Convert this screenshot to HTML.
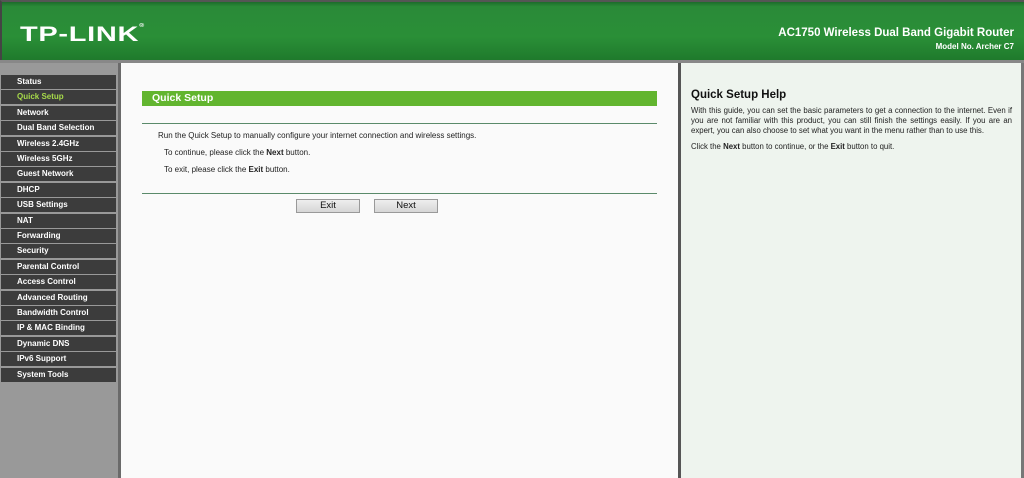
<!DOCTYPE html>
<html><head><style>
*{margin:0;padding:0;box-sizing:border-box}
body{width:1024px;height:478px;overflow:hidden;font-family:"Liberation Sans",sans-serif;background:#f8f8f8;position:relative}
#hdr{position:absolute;left:0;top:0;width:1024px;height:60px;background:linear-gradient(#1d6b2b 0,#2a8a38 8%,#2a8f37 60%,#1f7a2c 100%);border-top:2px solid #555;border-left:2px solid #444}
#logo{position:absolute;left:18px;top:21px;color:#fff;font-weight:bold;font-size:21px;letter-spacing:0.5px;transform:scaleX(1.38);transform-origin:left top}
#logo sup{font-size:5px;vertical-align:top}
#t1{position:absolute;right:10px;top:25px;color:#fff;font-weight:bold;font-size:11.5px}
#t2{position:absolute;right:10px;top:40px;color:#fff;font-weight:bold;font-size:8px}
#strip{position:absolute;left:0;top:60px;width:1024px;height:3px;background:#888}
#side{position:absolute;left:0;top:63px;width:121px;height:415px;background:#999;border-right:3px solid #6a6a6a}
.m{position:absolute;left:1px;width:115px;height:14px;background:#3c3c3c;color:#fff;font-size:8px;font-weight:bold;padding-left:16px;line-height:14px}
#main{position:absolute;left:121px;top:63px;width:557px;height:415px;background:#fafafa}
#div{position:absolute;left:678px;top:63px;width:3px;height:415px;background:#555}
#help{position:absolute;left:681px;top:63px;width:343px;height:415px;background:#eef4ee;border-right:3px solid #777}
#bar{position:absolute;left:142px;top:91px;width:515px;height:15px;background:#62b52f;color:#fff;font-weight:bold;font-size:10.5px;line-height:15px;padding-left:10px}
.hr{position:absolute;left:142px;width:515px;height:1px;background:#5a8a6a}
.p{position:absolute;font-size:8px;color:#222}
.btn{position:absolute;top:199px;width:64px;height:14px;background:linear-gradient(#eee,#d6d6d6);border:1px solid #999;font-size:9.5px;text-align:center;line-height:12px;color:#111}
</style></head><body>
<div id="hdr"><div id="logo">TP-LINK<sup>®</sup></div><div id="t1">AC1750 Wireless Dual Band Gigabit Router</div><div id="t2">Model No. Archer C7</div></div>
<div id="strip"></div>
<div id="side">
<div class="m" style="top:12px">Status</div>
<div class="m" style="top:27.4px;color:#a6d94a">Quick Setup</div>
<div class="m" style="top:42.8px">Network</div>
<div class="m" style="top:58.2px">Dual Band Selection</div>
<div class="m" style="top:73.6px">Wireless 2.4GHz</div>
<div class="m" style="top:89px">Wireless 5GHz</div>
<div class="m" style="top:104.4px">Guest Network</div>
<div class="m" style="top:119.8px">DHCP</div>
<div class="m" style="top:135.2px">USB Settings</div>
<div class="m" style="top:150.6px">NAT</div>
<div class="m" style="top:166px">Forwarding</div>
<div class="m" style="top:181.4px">Security</div>
<div class="m" style="top:196.8px">Parental Control</div>
<div class="m" style="top:212.2px">Access Control</div>
<div class="m" style="top:227.6px">Advanced Routing</div>
<div class="m" style="top:243px">Bandwidth Control</div>
<div class="m" style="top:258.4px">IP &amp; MAC Binding</div>
<div class="m" style="top:273.8px">Dynamic DNS</div>
<div class="m" style="top:289.2px">IPv6 Support</div>
<div class="m" style="top:304.6px">System Tools</div>
</div>
<div id="main"></div>
<div id="bar">Quick Setup</div>
<div class="hr" style="top:123px"></div>
<div class="p" style="left:158px;top:131px">Run the Quick Setup to manually configure your internet connection and wireless settings.</div>
<div class="p" style="left:164px;top:148px">To continue, please click the <b>Next</b> button.</div>
<div class="p" style="left:164px;top:165px">To exit, please click the <b>Exit</b> button.</div>
<div class="hr" style="top:193px"></div>
<div class="btn" style="left:296px">Exit</div>
<div class="btn" style="left:374px">Next</div>
<div id="div"></div>
<div id="help">
<div style="position:absolute;left:10px;top:26px;font-size:11.5px;font-weight:bold;color:#111">Quick Setup Help</div>
<div style="position:absolute;left:10px;top:43px;width:321px;font-size:7.8px;line-height:10px;color:#222;text-align:justify">With this guide, you can set the basic parameters to get a connection to the internet. Even if you are not familiar with this product, you can still finish the settings easily. If you are an expert, you can also choose to set what you want in the menu rather than to use this.</div>
<div style="position:absolute;left:10px;top:79px;font-size:7.8px;color:#222">Click the <b>Next</b> button to continue, or the <b>Exit</b> button to quit.</div>
</div>
</body></html>
